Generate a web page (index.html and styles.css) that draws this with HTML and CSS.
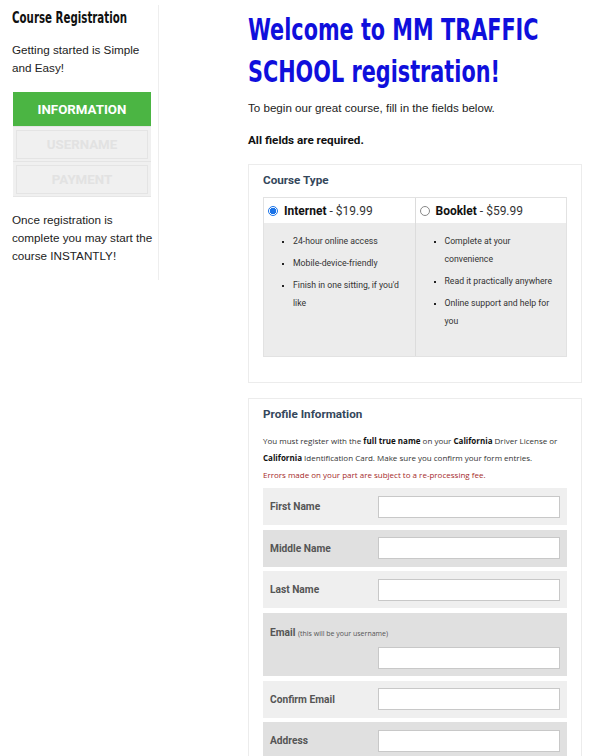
FILE: index.html
```html
<!DOCTYPE html>
<html lang="en">
    <head>
        <meta charset="UTF-8">
        <meta name="viewport" content="width=device-width, initial-scale=1.0">
        <title>Course Registration</title>
        <link rel="stylesheet" href="styles.css">
    </head>
    <body>
        <div class="page">
            <div class="sidebar">
                <h3 class="side-title"><span>Course Registration</span></h3>
                <p class="side-text">Getting started is Simple and Easy!</p>
                <div class="steps">
                    <div class="step step-active">INFORMATION</div>
                    <div class="step"><span>USERNAME</span></div>
                    <div class="step"><span>PAYMENT</span></div>
                </div>
                <p class="side-text">Once registration is complete you may start the course INSTANTLY!</p>
            </div>

            <div class="main">
                <h1 class="headline"><span>Welcome to MM TRAFFIC<br>SCHOOL registration!</span></h1>
                <p class="intro">To begin our great course, fill in the fields below.</p>
                <p class="required">All fields are required.</p>

                <div class="card">
                    <h4 class="card-title">Course Type</h4>
                    <div class="course-table">
                        <div class="course-col">
                            <div class="course-head">
                                <span class="radio radio-on"></span>
                                <b>Internet</b> - $19.99
                            </div>
                            <ul class="course-list">
                                <li>24-hour online access</li>
                                <li>Mobile-device-friendly</li>
                                <li>Finish in one sitting, if you'd like</li>
                            </ul>
                        </div>
                        <div class="course-col">
                            <div class="course-head">
                                <span class="radio"></span>
                                <b>Booklet</b> - $59.99
                            </div>
                            <ul class="course-list">
                                <li>Complete at your convenience</li>
                                <li>Read it practically anywhere</li>
                                <li>Online support and help for you</li>
                            </ul>
                        </div>
                    </div>
                </div>

                <div class="card card-profile">
                    <h4 class="card-title">Profile Information</h4>
                    <p class="note">You must register with the <b>full true name</b> on your <b>California</b> Driver License or <b>California</b> Identification Card. Make sure you confirm your form entries.</p>
                    <p class="note note-error">Errors made on your part are subject to a re-processing fee.</p>
                    <div class="fields">
                        <div class="field">
                            <label>First Name</label>
                            <input type="text">
                        </div>
                        <div class="field field-dark">
                            <label>Middle Name</label>
                            <input type="text">
                        </div>
                        <div class="field">
                            <label>Last Name</label>
                            <input type="text">
                        </div>
                        <div class="field field-dark field-stack">
                            <label>Email <small>(this will be your username)</small></label>
                            <input type="text">
                        </div>
                        <div class="field">
                            <label>Confirm Email</label>
                            <input type="text">
                        </div>
                        <div class="field field-dark">
                            <label>Address</label>
                            <input type="text">
                        </div>
                    </div>
                </div>
            </div>
        </div>
    </body>
</html>
```

FILE: styles.css
```css
body {
    margin: 0;
    padding: 0;
    font-family: "Liberation Sans", Arial, sans-serif;
    color: #222;
    background: #fff;
}

.page {
    display: flex;
    align-items: flex-start;
}

/* left column */
.sidebar {
    width: 146px;
    margin: 5px 0 0 12px;
    padding: 3px 0 15px 0;
    border-right: 1px solid #eeeeee;
}

/* condensed display face: DejaVu condensed, squeezed a bit more */
.side-title,
.headline {
    font-family: "DejaVu Sans", sans-serif;
    font-stretch: condensed;
    font-weight: bold;
    white-space: nowrap;
}

.side-title span,
.headline span {
    display: inline-block;
    transform-origin: left top;
}

.side-title {
    margin: 0;
    font-size: 15px;
    line-height: 20px;
    color: #111;
}

.side-title span {
    transform: scaleX(0.76);
}

.side-text {
    margin: 13px 0 0;
    font-size: 11.7px;
    line-height: 18px;
    color: #222;
}

.steps {
    width: 138px;
    margin: 15px 0 14px 1px;
    background: #f0f0f0;
    border-bottom: 1px solid #e6e6e6;
}

.step {
    height: 34px;
    display: flex;
    align-items: center;
    justify-content: center;
    font-family: Roboto, sans-serif;
    font-weight: bold;
    font-size: 13.3px;
    border-top: 1px solid #e4e4e4;
}

.step span {
    flex: 1;
    margin: 0 3px;
    height: 27px;
    display: flex;
    align-items: center;
    justify-content: center;
    border: 1px solid #e4e4e4;
    color: #e2e2e2;
}

.step-active {
    background: #4bb543;
    color: #fff;
    border-top: none;
}

/* main column */
.main {
    width: 334px;
    margin-left: 89px;
}

.headline {
    margin: 9px 0 0;
    font-size: 30px;
    line-height: 42px;
    color: #0f0fdc;
}

.headline span {
    transform: scaleX(0.77);
}

.intro {
    margin: 6px 0 0;
    font-size: 11.6px;
    line-height: 18px;
    color: #222;
}

.required {
    margin: 14px 0 0;
    font-family: Roboto, sans-serif;
    font-size: 11.7px;
    line-height: 18px;
    font-weight: bold;
    color: #111;
}

.card {
    margin-top: 15px;
    border: 1px solid #ececec;
    padding: 6px 14px 25px;
}

.card-title {
    margin: 0 0 8px;
    font-family: Roboto, sans-serif;
    font-size: 11.7px;
    line-height: 18px;
    font-weight: bold;
    color: #34475b;
}

.course-table {
    display: flex;
    border: 1px solid #e2e2e2;
    background: #ececec;
}

.course-col {
    flex: 1;
    min-height: 158px;
}

.course-col + .course-col {
    border-left: 1px solid #dcdcdc;
}

.course-head {
    height: 25px;
    display: flex;
    align-items: center;
    padding-left: 4px;
    background: #fff;
    font-family: Roboto, sans-serif;
    font-size: 12px;
    color: #333;
}

.course-head b {
    color: #111;
    margin-right: 3px;
}

.radio {
    width: 8px;
    height: 8px;
    border: 1px solid #888;
    border-radius: 50%;
    margin: 0 6px 0 0;
    background: #fff;
}

.radio-on {
    border-color: #1a73e8;
    background: radial-gradient(circle, #1a73e8 0 3px, #fff 3.5px);
}

.course-list {
    margin: 0;
    padding: 9px 10px 0 29px;
    list-style: square;
    font-family: Roboto, sans-serif;
    font-size: 8.7px;
    line-height: 18px;
    color: #333;
}

.course-list li {
    margin-bottom: 4px;
}

.course-list li::marker {
    font-size: 7px;
    color: #222;
}

.card-profile {
    padding-bottom: 20px;
}

.card-profile .card-title {
    margin-bottom: 8.5px;
}

.note {
    margin: 0;
    font-family: "Open Sans", sans-serif;
    font-size: 8px;
    line-height: 17px;
    color: #333;
}

.note b {
    color: #111;
}

.note-error {
    color: #a52a2a;
}

.fields {
    margin-top: 5.5px;
    display: flex;
    flex-direction: column;
    gap: 4.5px;
}

.field {
    display: flex;
    align-items: center;
    padding: 7.5px 7px;
    background: #efefef;
}

.field-dark {
    background: #e0e0e0;
}

.field label {
    flex: 0 0 108px;
    font-family: Roboto, sans-serif;
    font-size: 10.2px;
    font-weight: bold;
    color: #555;
}

.field label small {
    font-family: "Open Sans", sans-serif;
    font-size: 7px;
    font-weight: normal;
}

.field input {
    flex: 1;
    min-width: 0;
    height: 22px;
    box-sizing: border-box;
    border: 1px solid #c8c8c8;
    background: #fff;
    margin: 0;
    padding: 0 4px;
}

.field-stack {
    flex-wrap: wrap;
    padding-top: 13px;
    padding-bottom: 7.5px;
}

.field-stack label {
    flex-basis: 100%;
    line-height: 14px;
    margin-bottom: 6px;
}

.field-stack input {
    margin-left: 108px;
}
```
